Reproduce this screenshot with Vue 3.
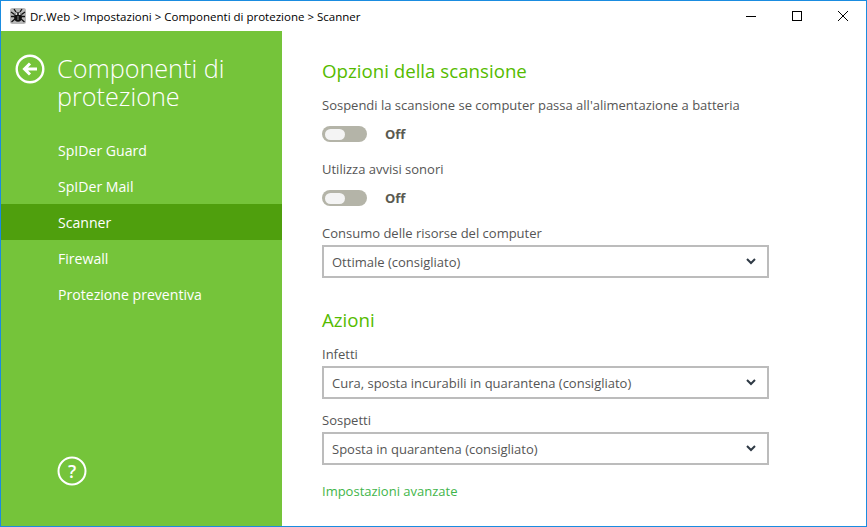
<script setup>
const menu = [
  { name: 'SpIDer Guard' },
  { name: 'SpIDer Mail' },
  { name: 'Scanner', active: true },
  { name: 'Firewall' },
  { name: 'Protezione preventiva' }
]
</script>

<template>
  <div class="window">
    <div class="titlebar">
      <svg class="app-icon" width="16" height="16" viewBox="0 0 16 16">
        <rect x="0" y="0" width="16" height="16" rx="2.500" fill="#b8b8b8" />
        <path d="M1 4l3.500 2.500M15 4l-3.500 2.500M1 8.500h3M15 8.500h-3M1.500 14l3.500-3M14.500 14L11 11M4 1l2 3M12 1l-2 3" stroke="#111" stroke-width="1.300" fill="none" />
        <ellipse cx="8" cy="9" rx="4" ry="4.800" fill="#111" />
        <circle cx="6.300" cy="6" r="1.100" fill="#eee" />
        <circle cx="9.700" cy="6" r="1.100" fill="#eee" />
        <path d="M8 8v4" stroke="#888" stroke-width="1" />
      </svg>
      <span class="title">Dr.Web &gt; Impostazioni &gt; Componenti di protezione &gt; Scanner</span>
      <div class="win-buttons">
        <svg width="10" height="10" viewBox="0 0 10 10"><path d="M0 5.500h10" stroke="#000" fill="none" /></svg>
        <svg width="10" height="10" viewBox="0 0 10 10"><rect x="0.500" y="0.500" width="9" height="9" stroke="#000" fill="none" /></svg>
        <svg width="10" height="10" viewBox="0 0 10 10"><path d="M0 0l10 10M10 0L0 10" stroke="#000" fill="none" /></svg>
      </div>
    </div>

    <div class="body">
      <aside class="sidebar">
        <div class="side-head">
          <svg class="back" width="30" height="30" viewBox="0 0 30 30">
            <circle cx="15" cy="15" r="13.300" fill="none" stroke="#fff" stroke-width="2.400" />
            <path d="M22 15H10M15 9.500L9.500 15l5.500 5.500" fill="none" stroke="#fff" stroke-width="3" />
          </svg>
          <h1>Componenti di protezione</h1>
        </div>
        <nav class="menu">
          <div v-for="item in menu" :key="item.name" class="menu-item" :class="{ active: item.active }">{{ item.name }}</div>
        </nav>
        <svg class="help" width="30" height="30" viewBox="0 0 30 30">
          <circle cx="15" cy="15" r="13.500" fill="none" stroke="#fff" stroke-width="2" />
          <text x="15" y="21.500" text-anchor="middle" class="help-mark">?</text>
        </svg>
      </aside>

      <main class="content">
        <h2>Opzioni della scansione</h2>
        <div class="label first">Sospendi la scansione se computer passa all'alimentazione a batteria</div>
        <div class="toggle-row"><span class="toggle"><span class="knob"></span></span><b>Off</b></div>
        <div class="label">Utilizza avvisi sonori</div>
        <div class="toggle-row"><span class="toggle"><span class="knob"></span></span><b>Off</b></div>
        <div class="label">Consumo delle risorse del computer</div>
        <div class="select">
          <span>Ottimale (consigliato)</span>
          <svg width="10" height="7" viewBox="0 0 10 7"><path d="M1 1l4 4 4-4" fill="none" stroke="#2f3a45" stroke-width="2" /></svg>
        </div>

        <h2 class="second">Azioni</h2>
        <div class="label first">Infetti</div>
        <div class="select">
          <span>Cura, sposta incurabili in quarantena (consigliato)</span>
          <svg width="10" height="7" viewBox="0 0 10 7"><path d="M1 1l4 4 4-4" fill="none" stroke="#2f3a45" stroke-width="2" /></svg>
        </div>
        <div class="label l3">Sospetti</div>
        <div class="select">
          <span>Sposta in quarantena (consigliato)</span>
          <svg width="10" height="7" viewBox="0 0 10 7"><path d="M1 1l4 4 4-4" fill="none" stroke="#2f3a45" stroke-width="2" /></svg>
        </div>
        <a class="advanced">Impostazioni avanzate</a>
      </main>
    </div>
  </div>
</template>

<style>
html, body { margin: 0; background: #fff; }
</style>

<style scoped>
.window {
  width: 867px;
  height: 527px;
  box-sizing: border-box;
  border: 1px solid #1a8ce0;
  display: flex;
  flex-direction: column;
  font-family: "Open Sans", "Noto Sans", sans-serif;
  overflow: hidden;
  background: #fff;
}

.titlebar {
  height: 30px;
  flex: none;
  display: flex;
  align-items: center;
  padding-left: 9px;
}

.app-icon { margin-right: 4px; }

.title {
  font-size: 11.500px;
  color: #000;
}

.win-buttons {
  margin-left: auto;
  display: flex;
  gap: 36px;
  padding-right: 18px;
}

.body {
  flex: 1;
  display: flex;
  min-height: 0;
}

.sidebar {
  width: 281px;
  flex: none;
  background: #75c43a;
  display: flex;
  flex-direction: column;
  color: #fff;
}

.side-head {
  display: flex;
  padding: 23px 0 0 14px;
}

.back { flex: none; margin-right: 12px; }

h1 {
  margin: 0;
  width: 190px;
  font-size: 25.200px;
  line-height: 28px;
  font-weight: 300;
  color: #fff;
}

.menu {
  margin-top: 22px;
  display: flex;
  flex-direction: column;
}

.menu-item {
  height: 36px;
  line-height: 38px;
  padding-left: 57px;
  font-size: 14.100px;
  color: #fff;
}

.menu-item.active { background: #4f9f0d; }

.help {
  margin-top: auto;
  margin-left: 56px;
  margin-bottom: 40px;
}

.help-mark {
  font-size: 18px;
  font-weight: 600;
  fill: #fff;
}

.content {
  flex: 1;
  padding: 28px 0 0 40px;
  color: #555;
  font-size: 13px;
}

h2 {
  margin: 0;
  font-size: 18.700px;
  line-height: 24px;
  font-weight: 400;
  color: #55bb00;
}

h2.second { margin-top: 30px; }

.label {
  line-height: 18px;
  margin-top: 17px;
  color: #555;
}

.label.first { margin-top: 13px; }
.label.l3 { margin-top: 12px; }

.toggle-row {
  display: flex;
  align-items: center;
  height: 18px;
  margin-top: 11px;
}

.toggle-row b {
  margin-left: 18px;
  font-size: 13px;
  font-weight: 700;
  color: #5a5a50;
}

.toggle {
  width: 45px;
  height: 16px;
  border-radius: 8px;
  background: #b4b4a8;
  display: flex;
  align-items: center;
  padding-left: 3px;
  box-sizing: border-box;
}

.knob {
  width: 20px;
  height: 11px;
  border-radius: 6px;
  background: #f4f4f4;
}

.select {
  width: 447px;
  height: 33px;
  box-sizing: border-box;
  border: 2px solid #bcbcbc;
  margin-top: 3px;
  display: flex;
  align-items: center;
  justify-content: space-between;
  padding: 0 11px 0 8px;
  color: #555;
}

.advanced {
  display: block;
  margin-top: 17px;
  line-height: 18px;
  color: #3fb54a;
}
</style>
